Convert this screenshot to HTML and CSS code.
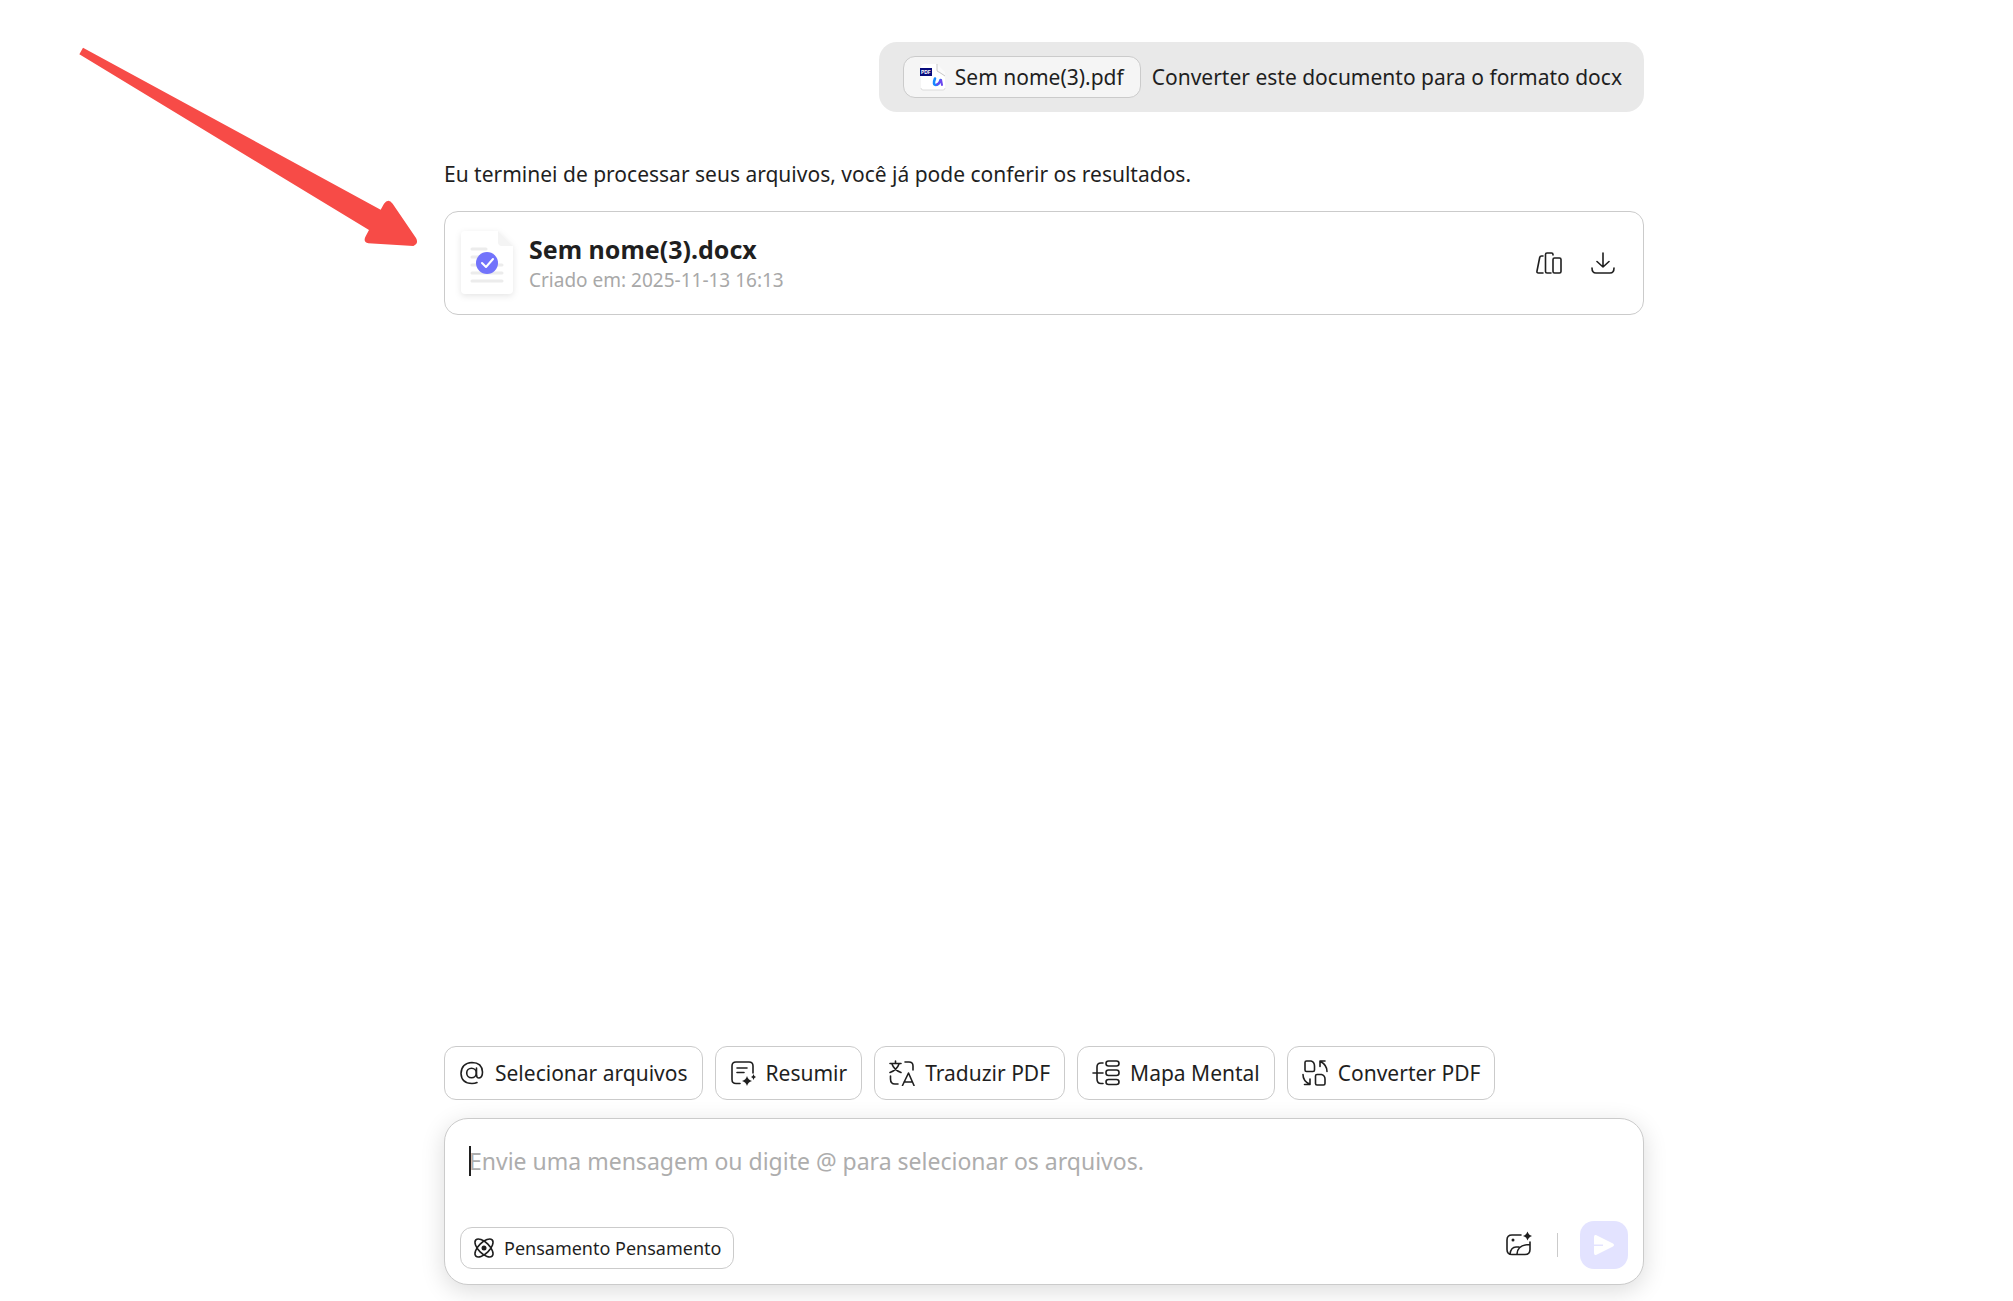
FILE: index.html
```html
<!DOCTYPE html>
<html lang="pt-BR">
<head>
<meta charset="utf-8">
<meta name="viewport" content="width=device-width, initial-scale=1">
<title>Assistente de PDF</title>
<link rel="stylesheet" href="styles.css">
</head>
<body>
<div class="page">
  <main class="thread">
    <div class="bubble">
      <span class="file-chip">
        <svg class="file-chip-icon" width="26" height="28" viewBox="0 0 26 28" aria-hidden="true">
          <path d="M4 1H16L25 10V25Q25 27 23 27H3Q1 27 1 25V4Q1 1 4 1Z" fill="#fff"/>
          <path d="M1 25Q1 27 3 27H23Q25 27 25 25" fill="none" stroke="#dcdcdc"/>
          <path d="M17 1V7Q17 9 19 10L25 13V9Z" fill="#fafafa"/>
          <path d="M17 1V7Q17 9 19 9L25 13" fill="none" stroke="#c8c8c8"/>
          <rect y="5" width="12" height="8" fill="#070b7d"/>
          <text x="1" y="11" font-size="5" font-weight="700" fill="#fff" font-family="Inter, sans-serif">PDF</text>
          <path d="M15 15.500Q12.500 22 16 22Q19 22 20.500 17" fill="none" stroke="#1688ff" stroke-width="2.600" stroke-linecap="round"/>
          <path d="M17 21.500Q20 20 21 16.500L22 22" fill="none" stroke="#6b45ee" stroke-width="2" stroke-linecap="round"/>
        </svg>
        Sem nome(3).pdf
      </span>
      <span>Converter este documento para o formato docx</span>
    </div>
    <p class="reply">Eu terminei de processar seus arquivos, você já pode conferir os resultados.</p>
    <article class="result">
      <svg class="result-icon" width="54" height="68" viewBox="0 0 54 68" aria-hidden="true">
        <path class="sheet" d="M5 2H38L53 17V61Q53 65 49 65H5Q1 65 1 61V6Q1 2 5 2Z" fill="#fff"/>
        <path d="M38 2L53 17H42Q38 17 38 13Z" fill="#f4f4f4"/>
        <path d="M12 20H26M12 28H22M12 36H42M12 44H42M12 52H42" stroke="#ececec" stroke-width="3" stroke-linecap="round"/>
        <circle cx="27" cy="34" r="11" fill="#7273fb"/>
        <path d="M22 34L26 38L33 30" fill="none" stroke="#fff" stroke-width="2" stroke-linecap="round" stroke-linejoin="round"/>
      </svg>
      <div class="result-text">
        <h2 class="result-name">Sem nome(3).docx</h2>
        <p class="result-date">Criado em: 2025-11-13 16:13</p>
      </div>
      <div class="result-actions">
        <button class="icon-button" type="button" aria-label="Biblioteca">
          <svg class="icon" width="28" height="28" viewBox="0 0 28 28" aria-hidden="true"><path d="M8 7H6.500Q5 7 4.700 8.500L2 22Q1.600 24 3.500 24H8M16 24H12Q10.500 24 10.500 22.500V5.500Q10.500 4 12 4H16.500Q18 4 18 5.500V6"/><rect x="18" y="9" width="8" height="15" rx="1.500"/></svg>
        </button>
        <button class="icon-button" type="button" aria-label="Baixar">
          <svg class="icon" width="28" height="28" viewBox="0 0 28 28" aria-hidden="true"><path d="M14 4V18M8 12.500L14 18L20 12.500M3 19Q3 24 7 24H21Q25 24 25 19"/></svg>
        </button>
      </div>
    </article>
  </main>

  <footer class="dock">
    <div class="suggestions">
      <button class="suggestion" type="button">
        <svg class="icon" width="26" height="26" viewBox="0 0 26 26" aria-hidden="true"><circle cx="12.500" cy="13" r="4.800"/><path d="M17.500 8V14.500Q17.500 18 20 18Q23.500 17.500 23.500 12Q23 2.500 13 2.500Q2.500 3 2 13.500Q2.500 23.500 13 23.500Q16 23.500 18 22.500"/></svg>
        Selecionar arquivos
      </button>
      <button class="suggestion" type="button">
        <svg class="icon" width="26" height="26" viewBox="0 0 26 26" aria-hidden="true"><path d="M10 23.500H6Q2 23.500 2 19.500V6Q2 2 6 2H19Q23 2 23 6V13M7 8H17M7 12.500H14"/><path class="solid" d="M17 16Q18 20 22 21Q18 22 17 26Q16 22 12 21Q16 20 17 16ZM23.500 14Q24 16.500 26 17Q24 17.500 23.500 20Q23 17.500 21 17Q23 16.500 23.500 14Z"/></svg>
        Resumir
      </button>
      <button class="suggestion" type="button">
        <svg class="icon" width="26" height="26" viewBox="0 0 26 26" aria-hidden="true"><path d="M6.500 1V3.500M1 3.500H12M3 4Q5 10 12 12.500M10 4Q8 10 1 12.500M16 2H20Q24 2 24 6V10M1.500 16V19Q1.500 24 6 24H9M13.500 25.500L19.500 13L25 25.500M15 22H23.500"/></svg>
        Traduzir PDF
      </button>
      <button class="suggestion" type="button">
        <svg class="icon" width="28" height="26" viewBox="0 0 28 26" aria-hidden="true"><path d="M1 13H11M11 3H9Q5 3 5 7V19Q5 23.500 9 23.500H11"/><rect x="14" y="1" width="13" height="5" rx="2.500"/><rect x="14" y="10" width="13" height="5.500" rx="2.500"/><rect x="14" y="19.500" width="13" height="5" rx="2.500"/></svg>
        Mapa Mental
      </button>
      <button class="suggestion" type="button">
        <svg class="icon" width="26" height="28" viewBox="0 0 26 28" aria-hidden="true"><path d="M4.500 2H9Q12.500 3 12.500 7V11Q12.500 12.500 11 12.500H4.500Q3 12.500 3 11V3.500Q3 2 4.500 2ZM15 15.500H19.500Q23 16.500 23 20V24.500Q23 26 21.500 26H15Q13.500 26 13.500 24.500V17Q13.500 15.500 15 15.500ZM18 7.500V2H23M18.500 2.500Q25 6 25 12.500M8 20V25.500H2.500M7.500 25Q1 22 1 15.500"/></svg>
        Converter PDF
      </button>
    </div>

    <form class="composer">
      <div class="prompt">
        <textarea class="prompt-input" rows="1" aria-label="Mensagem" placeholder="Envie uma mensagem ou digite @ para selecionar os arquivos."></textarea>
        <span class="caret" aria-hidden="true"></span>
      </div>
      <div class="composer-bar">
        <button class="think" type="button">
          <svg class="icon" width="22" height="22" viewBox="0 0 22 22" aria-hidden="true"><ellipse cx="11" cy="11" rx="5.500" ry="11.500" transform="rotate(45 11 11)"/><ellipse cx="11" cy="11" rx="5.500" ry="11.500" transform="rotate(-45 11 11)"/><circle class="solid" cx="11" cy="11" r="2.500"/></svg>
          Pensamento Pensamento
        </button>
        <div class="composer-actions">
          <button class="icon-button" type="button" aria-label="Adicionar imagem">
            <svg class="icon" width="28" height="28" viewBox="0 0 28 28" aria-hidden="true"><path d="M16 4H7Q2 4 2 9V18.500Q2 23.500 7 23.500H20Q25 23.500 25 18.500V11M5 23Q6 16 11 16H14M12 23Q12.500 13.500 25 13.500"/><circle class="solid" cx="8" cy="9" r="1.500"/><path class="solid" d="M22.500 .5Q23.500 4 27 5Q23.500 6 22.500 9.500Q21.500 6 18 5Q21.500 4 22.500 .5Z"/></svg>
          </button>
          <span class="divider"></span>
          <button class="send" type="submit" aria-label="Enviar">
            <svg width="24" height="24" viewBox="0 0 24 24" aria-hidden="true"><path d="M4 2Q2 1.500 2 4V11.500H11V13H2V20Q2 22.500 4 22L21 13.500Q23 12 21 10.500Z" fill="#fff"/></svg>
          </button>
        </div>
      </div>
    </form>
  </footer>

  <svg class="pointer-arrow" width="380" height="230" viewBox="0 0 1140 690" aria-hidden="true">
    <path d="M69 53L962 539L972 521Q985 504 998 521L1068 624Q1077 641 1060 648L925 640Q908 636 917 619L927 600L58 73Z" fill="#f74b47"/>
  </svg>
</div>
</body>
</html>
```
FILE: styles.css
```css
* {
  box-sizing: border-box;
}

body {
  margin: 0;
  background: #fff;
  color: #1f1f1f;
  font-family: "Noto Sans", "Open Sans", sans-serif;
  font-size: 21px;
  line-height: 32px;
}

button,
textarea {
  font: inherit;
  color: inherit;
}

button {
  margin: 0;
  padding: 0;
  border: 0;
  background: none;
  cursor: pointer;
}

h2,
p {
  margin: 0;
}

svg {
  display: block;
  flex: none;
}

.page {
  position: relative;
  display: flex;
  flex-direction: column;
  align-items: center;
  min-height: 100vh;
  padding: 42px 0 16px 75px;
}

.thread,
.dock {
  width: 100%;
  max-width: 1200px;
}

.thread {
  flex: 1;
  display: flex;
  flex-direction: column;
}

.bubble {
  display: flex;
  align-items: center;
  align-self: flex-end;
  gap: 11px;
  padding: 14px 22px 14px 24px;
  border-radius: 18px;
  background: #e9e9e9;
}

.file-chip {
  display: flex;
  align-items: center;
  gap: 9px;
  height: 42px;
  padding: 0 16px;
  border: 1px solid #cbcbcb;
  border-radius: 12px;
  background: #f5f5f5;
}

.reply {
  margin-top: 46px;
}

.result {
  display: flex;
  align-items: center;
  gap: 15px;
  height: 104px;
  margin-top: 21px;
  padding: 0 26px 0 15px;
  border: 1px solid #cbcbcb;
  border-radius: 14px;
}

.sheet {
  filter: drop-shadow(0 2px 3px rgb(0 0 0 / 10%));
}

.result-icon {
  overflow: visible;
}

.result-text {
  flex: 1;
}

.result-name {
  font-size: 25px;
  font-weight: 700;
  line-height: 32px;
}

.result-date {
  margin-top: 1px;
  color: #a8a8a8;
  font-size: 19px;
  line-height: 28px;
}

.result-actions {
  display: flex;
  gap: 26px;
}

.icon {
  fill: none;
  stroke: #1f1f1f;
  stroke-width: 1.6;
  stroke-linecap: round;
  stroke-linejoin: round;
}

.solid {
  fill: #1f1f1f;
  stroke: none;
}

.suggestions {
  display: flex;
  flex-wrap: wrap;
  gap: 12px;
}

.suggestion {
  display: flex;
  align-items: center;
  gap: 10px;
  height: 54px;
  padding: 0 14px;
  border: 1px solid #cbcbcb;
  border-radius: 12px;
  background: #fff;
}

.composer {
  margin-top: 18px;
  padding: 26px 15px 15px;
  border: 1px solid #cbcbcb;
  border-radius: 24px;
  background: #fff;
  box-shadow: 0 6px 24px rgb(0 0 0 / 14%);
}

.prompt {
  position: relative;
  padding: 0 9px;
}

.prompt-input {
  display: block;
  width: 100%;
  height: 76px;
  padding: 0;
  border: 0;
  outline: 0;
  background: none;
  resize: none;
  font-size: 23px;
}

.prompt-input::placeholder {
  color: #adadad;
  opacity: 1;
}

.caret {
  position: absolute;
  top: 1px;
  left: 9px;
  width: 2px;
  height: 30px;
  background: #1f1f1f;
}

.composer-bar {
  display: flex;
  align-items: flex-end;
  justify-content: space-between;
}

.think {
  display: flex;
  align-items: center;
  gap: 9px;
  height: 42px;
  padding: 0 12px;
  border: 1px solid #cbcbcb;
  border-radius: 12px;
  font-size: 18px;
}

.composer-actions {
  display: flex;
  align-items: center;
}

.divider {
  width: 1px;
  height: 24px;
  margin: 0 22px 0 24px;
  background: #cbcbcb;
}

.send {
  display: grid;
  place-items: center;
  width: 48px;
  height: 48px;
  border-radius: 14px;
  background: #e3e3ff;
}

.pointer-arrow {
  position: absolute;
  top: 30px;
  left: 60px;
  pointer-events: none;
}
```
